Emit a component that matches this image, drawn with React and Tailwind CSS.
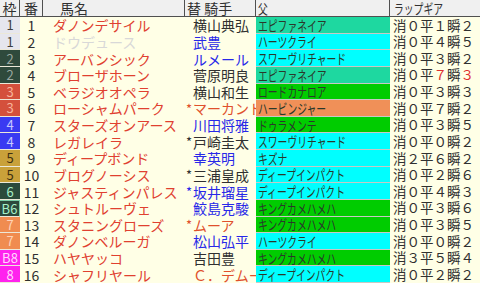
import React from "react";

const FRAME = {
  1: { bg: "bg-[#e6e6ee]", fg: "text-[#404040]" },
  2: { bg: "bg-[#2f4a3c]", fg: "text-[#9aa8a0]" },
  3: { bg: "bg-[#d4503c]", fg: "text-[#f8b49a]" },
  4: { bg: "bg-[#3a3af2]", fg: "text-[#c8c8ff]" },
  5: { bg: "bg-[#c9a13a]", fg: "text-[#403010]" },
  6: { bg: "bg-[#2c4a3c]", fg: "text-[#a8f0c8]" },
  7: { bg: "bg-[#f08c50]", fg: "text-[#ffd4b8]" },
  8: { bg: "bg-[#ff22ee]", fg: "text-[#ffd8ff]" },
};

const SIRE = {
  teal: "bg-[#1ed8a0]",
  cyan: "bg-[#00ffff]",
  green: "bg-[#00cc00]",
  orange: "bg-[#f09058]",
};

const JC = {
  k: "text-[#303030]",
  b: "text-[#2828e8]",
  r: "text-[#e0502c]",
};

const rows = [
  { w: 1, n: 1, name: "ダノンデサイル", j: "横山典弘", jc: "k", s: "エピファネイア", sc: "teal", lap: ["０", "１", "２"] },
  { w: 1, n: 2, name: "ドウデュース", gray: true, j: "武豊", jc: "b", s: "ハーツクライ", sc: "cyan", lap: ["０", "４", "５"] },
  { w: 2, n: 3, name: "アーバンシック", j: "ルメール", jc: "b", s: "スワーヴリチャード", sc: "cyan", lap: ["０", "３", "２"] },
  { w: 2, n: 4, name: "ブローザホーン", j: "菅原明良", jc: "k", s: "エピファネイア", sc: "teal", lap: ["０", "７", "３"], red: [1, 2] },
  { w: 3, n: 5, name: "ベラジオオペラ", j: "横山和生", jc: "k", s: "ロードカナロア", sc: "green", lap: ["０", "３", "３"] },
  { w: 3, n: 6, name: "ローシャムパーク", j: "マーカンド", star: true, jc: "r", s: "ハービンジャー", sc: "orange", lap: ["０", "７", "２"] },
  { w: 4, n: 7, name: "スターズオンアース", j: "川田将雅", jc: "b", s: "ドゥラメンテ", sc: "green", lap: ["０", "３", "５"] },
  { w: 4, n: 8, name: "レガレイラ", j: "戸崎圭太", star: true, jc: "k", s: "スワーヴリチャード", sc: "cyan", lap: ["０", "０", "２"] },
  { w: 5, n: 9, name: "ディープボンド", j: "幸英明", jc: "b", s: "キズナ", sc: "cyan", lap: ["２", "６", "２"] },
  { w: 5, n: 10, name: "ブログノーシス", j: "三浦皇成", star: true, jc: "k", s: "ディープインパクト", sc: "cyan", lap: ["０", "２", "６"] },
  { w: 6, n: 11, name: "ジャスティンパレス", j: "坂井瑠星", star: true, jc: "b", s: "ディープインパクト", sc: "cyan", lap: ["０", "４", "３"] },
  { w: 6, n: 12, name: "シュトルーヴェ", j: "鮫島克駿", jc: "b", s: "キングカメハメハ", sc: "green", lap: ["０", "３", "６"], wl: "B6", outline: true },
  { w: 7, n: 13, name: "スタニングローズ", j: "ムーア", star: true, jc: "r", s: "キングカメハメハ", sc: "green", lap: ["０", "３", "５"] },
  { w: 7, n: 14, name: "ダノンベルーガ", j: "松山弘平", jc: "b", s: "ハーツクライ", sc: "cyan", lap: ["０", "０", "２"] },
  { w: 8, n: 15, name: "ハヤヤッコ", j: "吉田豊", jc: "k", s: "キングカメハメハ", sc: "green", lap: ["３", "５", "４"], wl: "B8" },
  { w: 8, n: 16, name: "シャフリヤール", j: "Ｃ．デムーロ", jc: "r", s: "ディープインパクト", sc: "cyan", lap: ["０", "２", "２"] },
];

const LAPK = ["消", "平", "瞬"];

export default function App() {
  return (
    <div className="w-[480px] h-[283px] overflow-hidden bg-[#ffffe6] grid grid-cols-[20px_23px_142px_71px_134px_90px] grid-rows-[17px_repeat(16,minmax(0,1fr))] font-[family-name:'Noto_Sans_CJK_JP','Noto_Sans',sans-serif] text-[14px] leading-none text-[#303030]">
      {/* header */}
      <div className="bg-[#f0f0f0] border-b border-r border-[#505050] flex items-center justify-center text-[14px]">枠</div>
      <div className="bg-[#f0f0f0] border-b border-r border-[#505050] flex items-center justify-center text-[14px]">番</div>
      <div className="bg-[#f0f0f0] border-b border-r border-[#505050] flex items-center pl-[17px] text-[14px]">馬名</div>
      <div className="bg-[#f0f0f0] border-b border-r border-[#505050] flex items-center pl-[2px] text-[14px] whitespace-nowrap">替&nbsp;騎手</div>
      <div className="bg-[#f0f0f0] border-b border-r border-[#505050] flex items-center pl-[2px] text-[14px]">
        <span className="inline-block origin-left scale-x-[0.7]">父</span>
      </div>
      <div className="bg-[#f0f0f0] border-b border-[#505050] flex items-center pl-[4px] text-[14px] whitespace-nowrap">
        <span className="inline-block origin-left scale-x-[0.7]">ラップギア</span>
      </div>

      {rows.map((r) => {
        const f = FRAME[r.w];
        return (
          <React.Fragment key={r.n}>
            <div
              className={`${f.bg} ${f.fg} flex items-center justify-center text-[13px] border-b border-[#ece8d8] ${
                r.outline ? "border-t border-r border-t-[#7ccfa8] border-r-[#7ccfa8]" : ""
              }`}
            >
              {r.wl || r.w}
            </div>
            <div className="flex items-center justify-center text-[14px] text-[#303030]">{r.n}</div>
            <div
              className={`flex items-center pl-[10px] whitespace-nowrap overflow-hidden ${
                r.gray ? "text-[#d8d8d8]" : "text-[#e04030]"
              }`}
            >
              {r.name}
            </div>
            <div className={`flex items-center whitespace-nowrap overflow-hidden ${JC[r.jc]}`}>
              <span className="w-[8px] shrink-0 text-[13px] text-center">{r.star ? "*" : ""}</span>
              <span>{r.j}</span>
            </div>
            <div className={`${SIRE[r.sc]} flex items-center pl-[2px] border-b border-[#c8c8c4] overflow-hidden text-[14px] text-[#2a382a]`}>
              <span className="inline-block origin-left scale-x-[0.7] whitespace-nowrap">{r.s}</span>
            </div>
            <div className="flex items-center pl-[3px] text-[13.5px] whitespace-nowrap text-[#303030]">
              {LAPK.map((k, i) => (
                <React.Fragment key={k}>
                  <span>{k}</span>
                  <span className={r.red && r.red.includes(i) ? "text-[#e03030]" : ""}>{r.lap[i]}</span>
                </React.Fragment>
              ))}
            </div>
          </React.Fragment>
        );
      })}
    </div>
  );
}
